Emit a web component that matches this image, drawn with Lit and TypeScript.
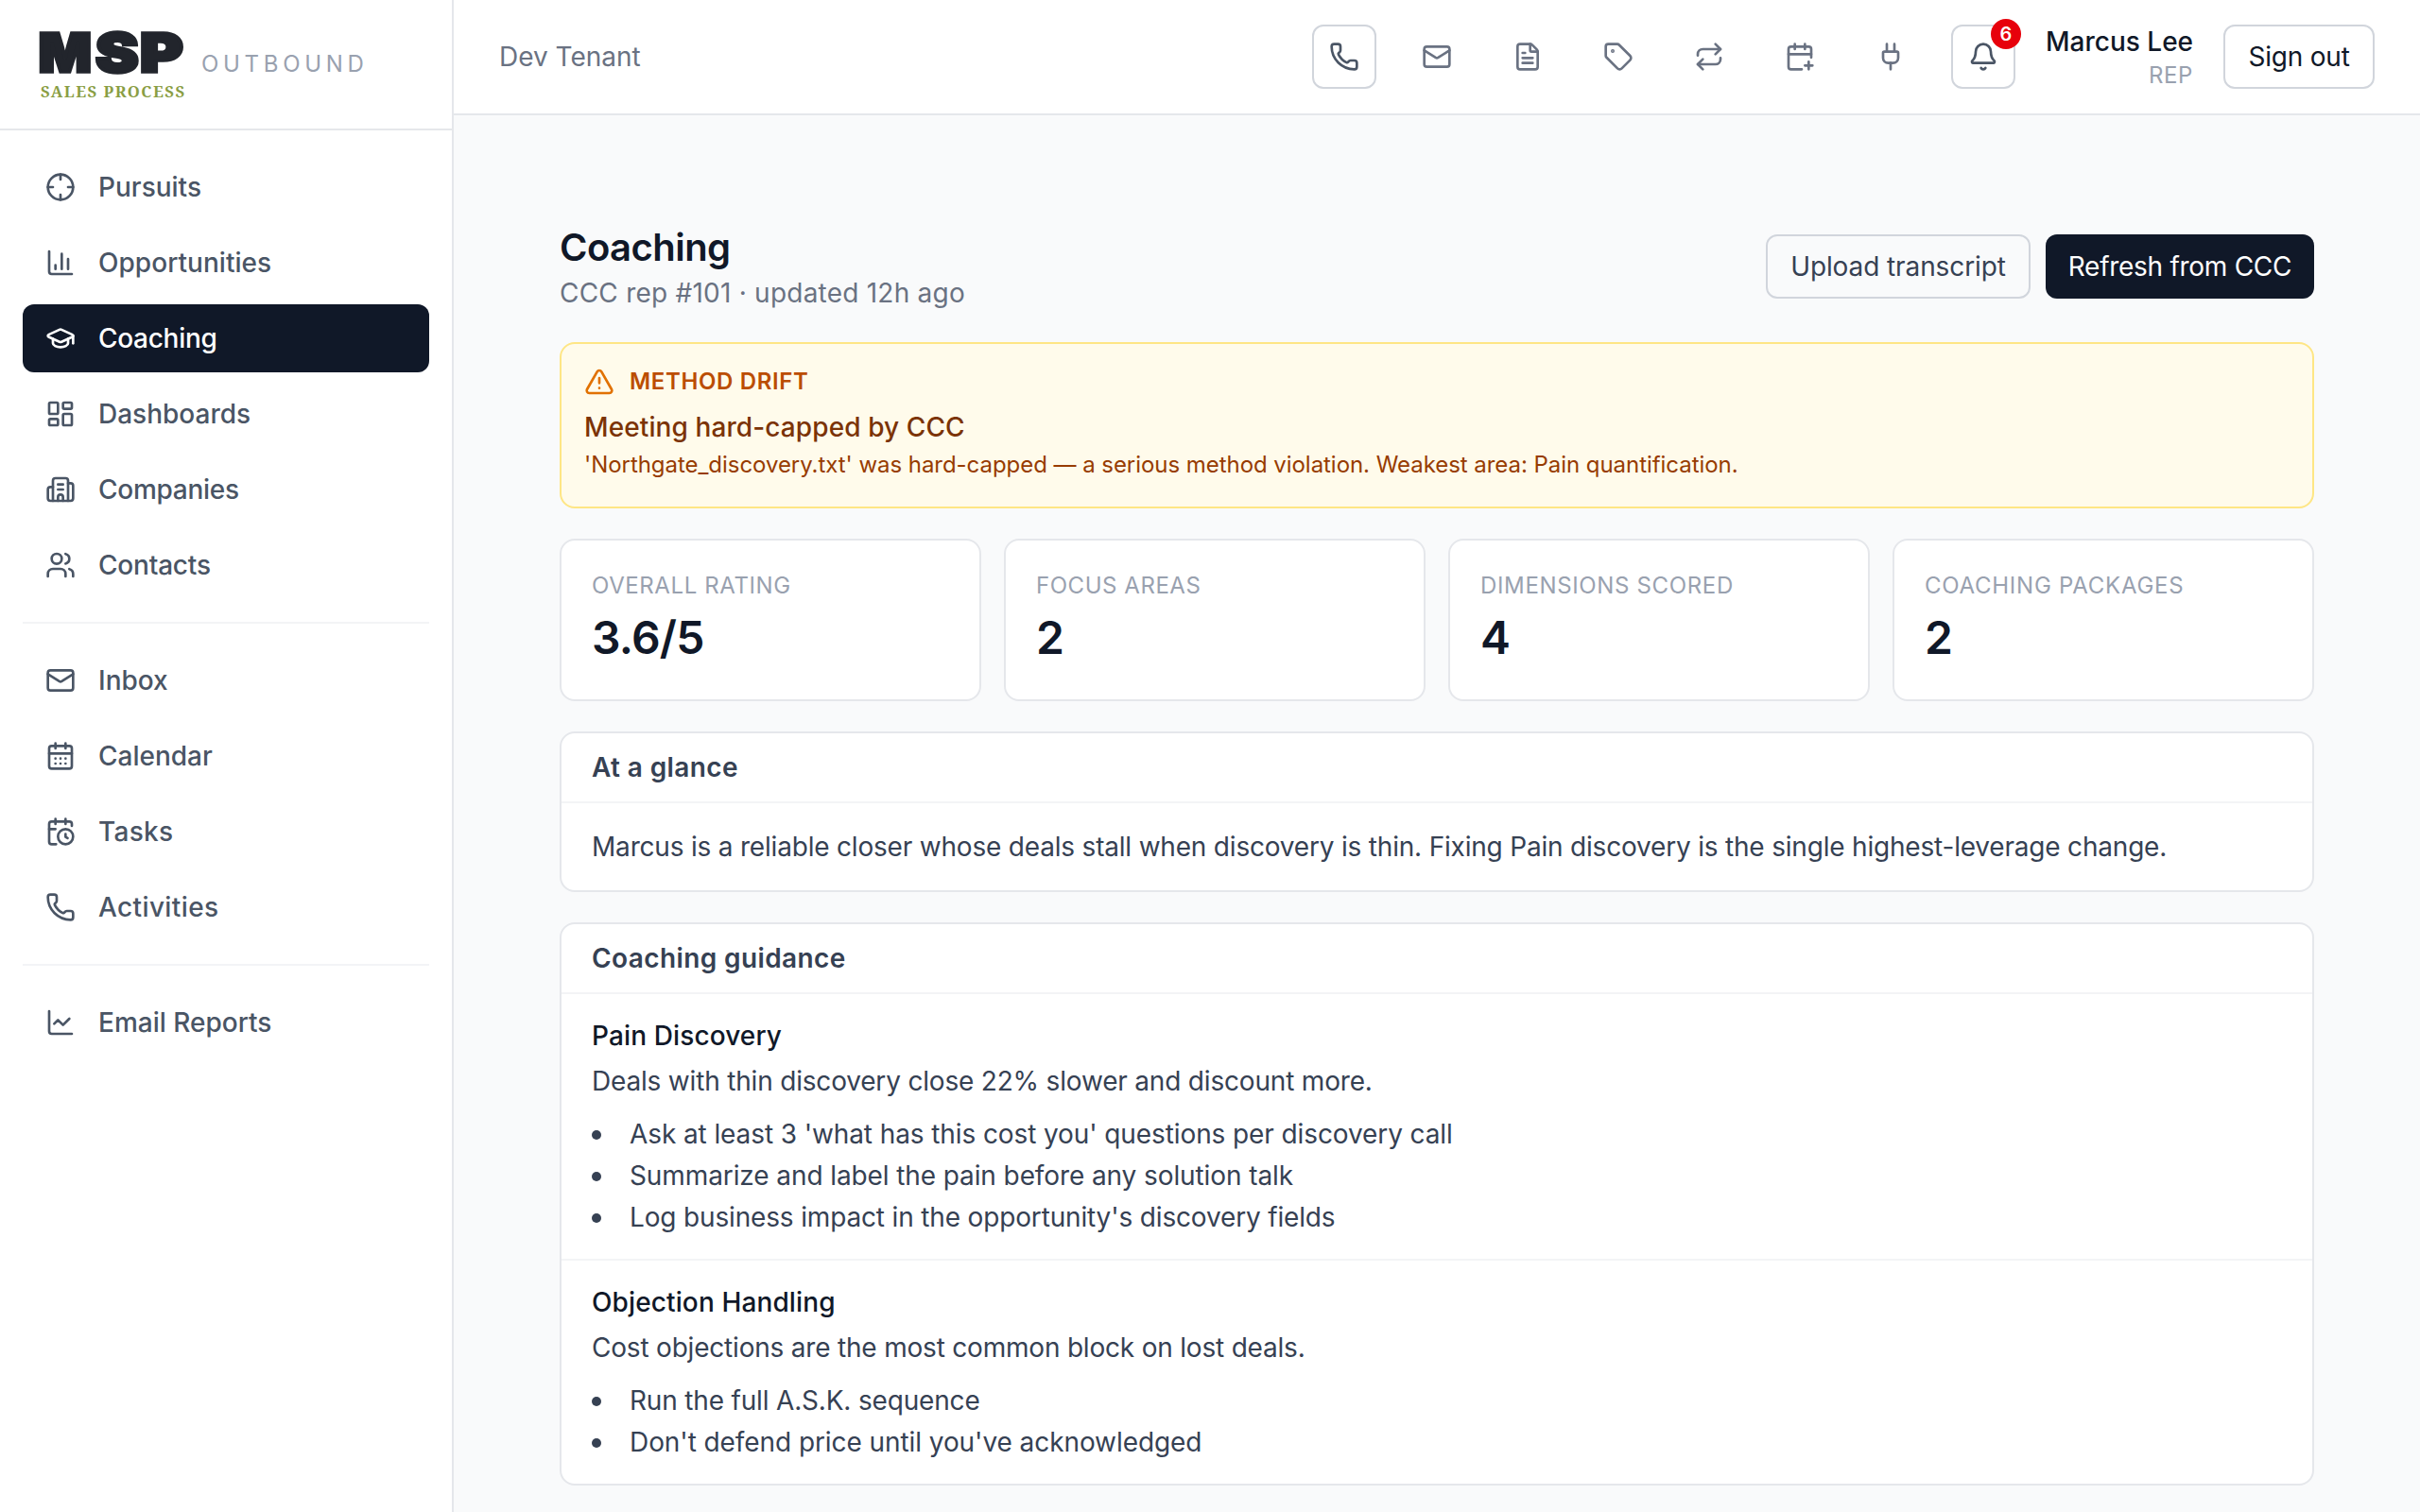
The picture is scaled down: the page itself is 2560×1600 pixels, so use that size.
import { LitElement, html, css, svg, type TemplateResult, type SVGTemplateResult } from "lit";
import { customElement, property } from "lit/decorators.js";
import { classMap } from "lit/directives/class-map.js";
import { styleMap } from "lit/directives/style-map.js";

const ICONS: Record<string, SVGTemplateResult> = {
  crosshair: svg`<circle cx="12" cy="12" r="10"/><path d="M22 12h-4M6 12H2M12 6V2M12 22v-4"/>`,
  chartColumn: svg`<path d="M3 3v16a2 2 0 0 0 2 2h16M18 17V9M13 17V5M8 17v-3"/>`,
  cap: svg`<path d="M21.42 10.922a1 1 0 0 0-.019-1.838L12.83 5.18a2 2 0 0 0-1.66 0L2.6 9.08a1 1 0 0 0 0 1.832l8.57 3.908a2 2 0 0 0 1.66 0z"/><path d="M22 10v6"/><path d="M6 12.5V16a6 3 0 0 0 12 0v-3.5"/>`,
  dashboard: svg`<rect width="7" height="9" x="3" y="3" rx="1"/><rect width="7" height="5" x="14" y="3" rx="1"/><rect width="7" height="9" x="14" y="12" rx="1"/><rect width="7" height="5" x="3" y="16" rx="1"/>`,
  building: svg`<path d="M10 12h4M10 8h4"/><path d="M14 21v-3a2 2 0 0 0-4 0v3"/><path d="M6 10H4a2 2 0 0 0-2 2v7a2 2 0 0 0 2 2h16a2 2 0 0 0 2-2V9a2 2 0 0 0-2-2h-2"/><path d="M6 21V5a2 2 0 0 1 2-2h8a2 2 0 0 1 2 2v16"/>`,
  users: svg`<path d="M16 21v-2a4 4 0 0 0-4-4H6a4 4 0 0 0-4 4v2"/><path d="M16 3.128a4 4 0 0 1 0 7.744"/><path d="M22 21v-2a4 4 0 0 0-3-3.87"/><circle cx="9" cy="7" r="4"/>`,
  mail: svg`<path d="m22 7-8.991 5.727a2 2 0 0 1-2.009 0L2 7"/><rect x="2" y="4" width="20" height="16" rx="2"/>`,
  calendarDays: svg`<path d="M8 2v4M16 2v4"/><rect width="18" height="18" x="3" y="4" rx="2"/><path d="M3 10h18M8 14h.01M12 14h.01M16 14h.01M8 18h.01M12 18h.01M16 18h.01"/>`,
  calendarClock: svg`<path d="M16 14v2.2l1.6 1M16 2v4"/><path d="M21 7.5V6a2 2 0 0 0-2-2H5a2 2 0 0 0-2 2v14a2 2 0 0 0 2 2h3.5"/><path d="M3 10h5M8 2v4"/><circle cx="16" cy="16" r="6"/>`,
  phone: svg`<path d="M13.832 16.568a1 1 0 0 0 1.213-.303l.355-.465A2 2 0 0 1 17 15h3a2 2 0 0 1 2 2v3a2 2 0 0 1-2 2A18 18 0 0 1 2 4a2 2 0 0 1 2-2h3a2 2 0 0 1 2 2v3a2 2 0 0 1-.8 1.6l-.468.351a1 1 0 0 0-.292 1.233 14 14 0 0 0 6.392 6.384"/>`,
  chartLine: svg`<path d="M3 3v16a2 2 0 0 0 2 2h16"/><path d="m19 9-5 5-4-4-3 3"/>`,
  file: svg`<path d="M6 22a2 2 0 0 1-2-2V4a2 2 0 0 1 2-2h8a2.4 2.4 0 0 1 1.704.706l3.588 3.588A2.4 2.4 0 0 1 20 8v12a2 2 0 0 1-2 2z"/><path d="M14 2v5a1 1 0 0 0 1 1h5"/><path d="M10 9H8M16 13H8M16 17H8"/>`,
  tag: svg`<path d="M12.586 2.586A2 2 0 0 0 11.172 2H4a2 2 0 0 0-2 2v7.172a2 2 0 0 0 .586 1.414l8.704 8.704a2.426 2.426 0 0 0 3.42 0l6.58-6.58a2.426 2.426 0 0 0 0-3.42z"/><circle cx="7.5" cy="7.5" r=".5" fill="currentColor"/>`,
  repeat: svg`<path d="m17 2 4 4-4 4"/><path d="M3 11v-1a4 4 0 0 1 4-4h14"/><path d="m7 22-4-4 4-4"/><path d="M21 13v1a4 4 0 0 1-4 4H3"/>`,
  calendarPlus: svg`<path d="M16 19h6M16 2v4M19 16v6"/><path d="M21 12.598V6a2 2 0 0 0-2-2H5a2 2 0 0 0-2 2v14a2 2 0 0 0 2 2h8.5"/><path d="M3 10h18M8 2v4"/>`,
  plug: svg`<path d="M12 22v-5M15 8V2"/><path d="M17 8a1 1 0 0 1 1 1v4a4 4 0 0 1-4 4h-4a4 4 0 0 1-4-4V9a1 1 0 0 1 1-1z"/><path d="M9 8V2"/>`,
  bell: svg`<path d="M10.268 21a2 2 0 0 0 3.464 0"/><path d="M3.262 15.326A1 1 0 0 0 4 17h16a1 1 0 0 0 .74-1.673C19.41 13.956 18 12.499 18 8A6 6 0 0 0 6 8c0 4.499-1.411 5.956-2.738 7.326"/>`,
  alert: svg`<path d="m21.73 18-8-14a2 2 0 0 0-3.48 0l-8 14A2 2 0 0 0 4 21h16a2 2 0 0 0 1.73-3"/><path d="M12 9v4M12 17h.01"/>`,
};

/** Text with an optional tracking value in pixels. */
interface Tracked {
  text: string;
  track?: number;
}

const tracked = (t: Tracked) => styleMap({ letterSpacing: t.track ? `${t.track}px` : undefined });

@customElement("ui-icon")
class UiIcon extends LitElement {
  @property() name = "mail";
  static styles = css`
    :host { display: block; width: 32px; height: 32px; flex: none; }
    svg { display: block; width: 32px; height: 32px; fill: none; stroke: currentColor; stroke-width: 2; stroke-linecap: round; stroke-linejoin: round; }
  `;
  render() {
    return html`<svg viewBox="0 0 24 24" aria-hidden="true">${ICONS[this.name]}</svg>`;
  }
}

interface NavItem extends Tracked {
  icon: string;
  active?: boolean;
}

const NAV: NavItem[][] = [
  [
    { icon: "crosshair", text: "Pursuits" },
    { icon: "chartColumn", text: "Opportunities", track: 0.04 },
    { icon: "cap", text: "Coaching", track: -0.3, active: true },
    { icon: "dashboard", text: "Dashboards" },
    { icon: "building", text: "Companies", track: -0.27 },
    { icon: "users", text: "Contacts", track: -0.2 },
  ],
  [
    { icon: "mail", text: "Inbox" },
    { icon: "calendarDays", text: "Calendar" },
    { icon: "calendarClock", text: "Tasks", track: 0.3 },
    { icon: "phone", text: "Activities", track: 0.38 },
  ],
  [{ icon: "chartLine", text: "Email Reports" }],
];

@customElement("app-sidebar")
class AppSidebar extends LitElement {
  static styles = css`
    :host { display: flex; flex-direction: column; box-sizing: border-box; width: 480px; flex: none; background: #fff; border-right: 2px solid #e5e7eb; }
    .brand { display: flex; align-items: center; gap: 15px; height: 72px; padding: 32px 40px; border-bottom: 2px solid #e5e7eb; }
    .logo { display: block; width: 158px; height: 72px; flex: none; overflow: visible; }
    .mark { font-family: Inter, sans-serif; font-weight: 900; font-size: 57px; fill: #22252c; stroke: #22252c; stroke-width: 3.5; stroke-linejoin: miter; }
    .tagline { font-family: "Noto Serif", "DejaVu Serif Condensed", "Liberation Serif", serif; font-weight: 700; font-size: 16.6px; fill: #8a9e44; }
    .product { font-size: 24px; line-height: 32px; letter-spacing: 4.7px; color: #99a1af; text-transform: uppercase; }
    nav { display: flex; flex-direction: column; padding: 24px; }
    .group { display: flex; flex-direction: column; gap: 8px; }
    .group + .group { margin-top: 24px; padding-top: 24px; border-top: 2px solid #f3f4f6; }
    .item { display: flex; align-items: center; gap: 24px; padding: 16px 24px; border-radius: 12px; font-size: 28px; line-height: 40px; font-weight: 500; color: #4a5565; }
    .active { background: #101828; color: #fff; }
  `;
  render() {
    return html`
      <div class="brand">
        <svg class="logo" viewBox="0 0 158 72">
          <g class="mark">
            <text transform="translate(0.8 44) scale(1.03 1)">M</text>
            <text transform="translate(61 44) scale(1.2 1)">S</text>
            <text transform="translate(108 44) scale(1.22 1)">P</text>
          </g>
          <text class="tagline" x="3" y="71" textLength="152">SALES PROCESS</text>
        </svg>
        <span class="product">Outbound</span>
      </div>
      <nav>
        ${NAV.map(
          (group) => html`<div class="group">
            ${group.map(
              (i) => html`<a class=${classMap({ item: true, active: !!i.active })}><ui-icon name=${i.icon}></ui-icon><span style=${tracked(i)}>${i.text}</span></a>`
            )}
          </div>`
        )}
      </nav>
    `;
  }
}

@customElement("app-header")
class AppHeader extends LitElement {
  static styles = css`
    :host { display: flex; align-items: center; justify-content: space-between; box-sizing: border-box; height: 122px; flex: none; padding: 0 48px; background: #fff; border-bottom: 2px solid #e5e7eb; font-size: 28px; line-height: 40px; }
    .tenant { color: #6a7282; }
    .tools { display: flex; align-items: center; gap: 32px; }
    .tool { display: block; padding: 16px; color: #6a7282; }
    .boxed { position: relative; color: #4a5565; border: 2px solid #d1d5dc; border-radius: 12px; }
    .badge { position: absolute; top: -8px; right: -8px; display: flex; align-items: center; justify-content: center; width: 32px; height: 32px; border-radius: 50%; background: #e7000b; color: #fff; font-size: 20px; line-height: 20px; font-weight: 600; }
    .user { display: flex; flex-direction: column; width: 156px; text-align: right; white-space: nowrap; }
    .name { font-weight: 500; color: #101828; }
    .role { font-size: 24px; line-height: 32px; letter-spacing: 0.6px; color: #99a1af; text-transform: uppercase; }
    .signout { box-sizing: border-box; width: 160px; padding: 12px 0; text-align: center; border: 2px solid #d1d5dc; border-radius: 12px; color: #101828; letter-spacing: -0.2px; }
  `;
  render() {
    return html`
      <span class="tenant">Dev Tenant</span>
      <div class="tools">
        <a class="tool boxed"><ui-icon name="phone"></ui-icon></a>
        ${["mail", "file", "tag", "repeat", "calendarPlus", "plug"].map(
          (n) => html`<a class="tool"><ui-icon name=${n}></ui-icon></a>`
        )}
        <a class="tool boxed"><ui-icon name="bell"></ui-icon><span class="badge">6</span></a>
        <div class="user"><span class="name">Marcus Lee</span><span class="role">Rep</span></div>
        <span class="signout">Sign out</span>
      </div>
    `;
  }
}

const STATS = [
  { label: { text: "Overall rating", track: 0.6 }, value: "3.6/5" },
  { label: { text: "Focus areas", track: 0.54 }, value: "2" },
  { label: { text: "Dimensions scored", track: 0.65 }, value: "4" },
  { label: { text: "Coaching packages", track: 0.74 }, value: "2" },
];

const GUIDANCE: { title: string; why: Tracked; steps: Tracked[] }[] = [
  {
    title: "Pain Discovery",
    why: { text: "Deals with thin discovery close 22% slower and discount more.", track: -0.185 },
    steps: [
      { text: "Ask at least 3 'what has this cost you' questions per discovery call", track: -0.1 },
      { text: "Summarize and label the pain before any solution talk", track: -0.1 },
      { text: "Log business impact in the opportunity's discovery fields", track: -0.157 },
    ],
  },
  {
    title: "Objection Handling",
    why: { text: "Cost objections are the most common block on lost deals.", track: -0.2 },
    steps: [
      { text: "Run the full A.S.K. sequence", track: -0.175 },
      { text: "Don't defend price until you've acknowledged", track: -0.075 },
    ],
  },
];

@customElement("coaching-page")
class CoachingPage extends LitElement {
  static styles = css`
    :host { display: flex; flex-direction: column; gap: 32px; padding: 112px 112px 28px; font-size: 28px; line-height: 40px; color: #364153; }
    .head { display: flex; align-items: center; justify-content: space-between; }
    h1 { margin: 0; font-size: 40px; line-height: 56px; font-weight: 600; letter-spacing: -0.55px; color: #101828; }
    .sub { color: #6a7282; letter-spacing: 0.23px; }
    .actions { display: flex; gap: 16px; }
    .btn { display: flex; align-items: center; justify-content: center; box-sizing: border-box; height: 68px; border-radius: 12px; }
    .outline { width: 280px; border: 2px solid #d1d5dc; letter-spacing: -0.1px; }
    .solid { width: 284px; background: #101828; color: #fff; letter-spacing: -0.28px; }
    .alert { padding: 24px; border: 2px solid #fee685; border-radius: 16px; background: #fffbeb; }
    .alert-tag { display: flex; align-items: center; gap: 16px; margin-bottom: 12px; color: #e17100; }
    .alert-label { font-size: 24px; line-height: 32px; font-weight: 600; letter-spacing: 0.65px; color: #bb4d00; text-transform: uppercase; }
    .alert-title { font-weight: 500; letter-spacing: 0.1px; color: #7b3306; }
    .alert-body { font-size: 24px; letter-spacing: -0.048px; color: #973c00; }
    .stats { display: grid; grid-template-columns: repeat(4, 1fr); gap: 24px; }
    .card { border: 2px solid #e5e7eb; border-radius: 16px; background: #fff; }
    .stat { padding: 32px; }
    .stat-label { font-size: 24px; line-height: 32px; color: #99a1af; text-transform: uppercase; }
    .stat-value { margin: 7px 0 1px; font-size: 48px; line-height: 64px; font-weight: 600; letter-spacing: -0.8px; color: #101828; }
    .card-head { padding: 16px 32px; border-bottom: 2px solid #f3f4f6; font-weight: 600; letter-spacing: 0.39px; }
    .card-body { padding: 24px 32px; line-height: 44px; letter-spacing: -0.195px; }
    .section { padding: 24px 32px; }
    .section + .section { border-top: 2px solid #f3f4f6; }
    .section-title { font-weight: 500; letter-spacing: 0.12px; color: #101828; }
    .why { margin-top: 8px; }
    ul { display: flex; flex-direction: column; gap: 4px; margin: 16px 0 0; padding: 0; list-style: none; }
    li { display: flex; align-items: center; gap: 30px; }
    li::before { content: ""; width: 10px; height: 10px; margin-top: 2px; border-radius: 50%; background: #364153; }
  `;

  private card(title: string, body: TemplateResult | TemplateResult[]) {
    return html`<div class="card"><div class="card-head">${title}</div>${body}</div>`;
  }

  render() {
    return html`
      <div class="head">
        <div><h1>Coaching</h1><div class="sub">CCC rep #101 · updated 12h ago</div></div>
        <div class="actions"><span class="btn outline">Upload transcript</span><span class="btn solid">Refresh from CCC</span></div>
      </div>
      <div class="alert">
        <div class="alert-tag"><ui-icon name="alert"></ui-icon><span class="alert-label">Method drift</span></div>
        <div class="alert-title">Meeting hard-capped by CCC</div>
        <div class="alert-body">'Northgate_discovery.txt' was hard-capped — a serious method violation. Weakest area: Pain quantification.</div>
      </div>
      <div class="stats">
        ${STATS.map((s) => html`<div class="card stat"><div class="stat-label" style=${tracked(s.label)}>${s.label.text}</div><div class="stat-value">${s.value}</div></div>`)}
      </div>
      ${this.card(
        "At a glance",
        html`<div class="card-body">Marcus is a reliable closer whose deals stall when discovery is thin. Fixing Pain discovery is the single highest-leverage change.</div>`
      )}
      ${this.card(
        "Coaching guidance",
        GUIDANCE.map(
          (g) => html`<div class="section">
            <div class="section-title">${g.title}</div>
            <div class="why" style=${tracked(g.why)}>${g.why.text}</div>
            <ul>${g.steps.map((s) => html`<li style=${tracked(s)}>${s.text}</li>`)}</ul>
          </div>`
        )
      )}
    `;
  }
}

@customElement("app-root")
class AppRoot extends LitElement {
  static styles = css`
    :host { display: flex; width: 2560px; height: 1600px; overflow: hidden; background: #f9fafb; font-family: Inter, "Liberation Sans", sans-serif; }
    .main { display: flex; flex-direction: column; flex: 1; min-width: 0; }
  `;
  render() {
    return html`<app-sidebar></app-sidebar><div class="main"><app-header></app-header><coaching-page></coaching-page></div>`;
  }
}
